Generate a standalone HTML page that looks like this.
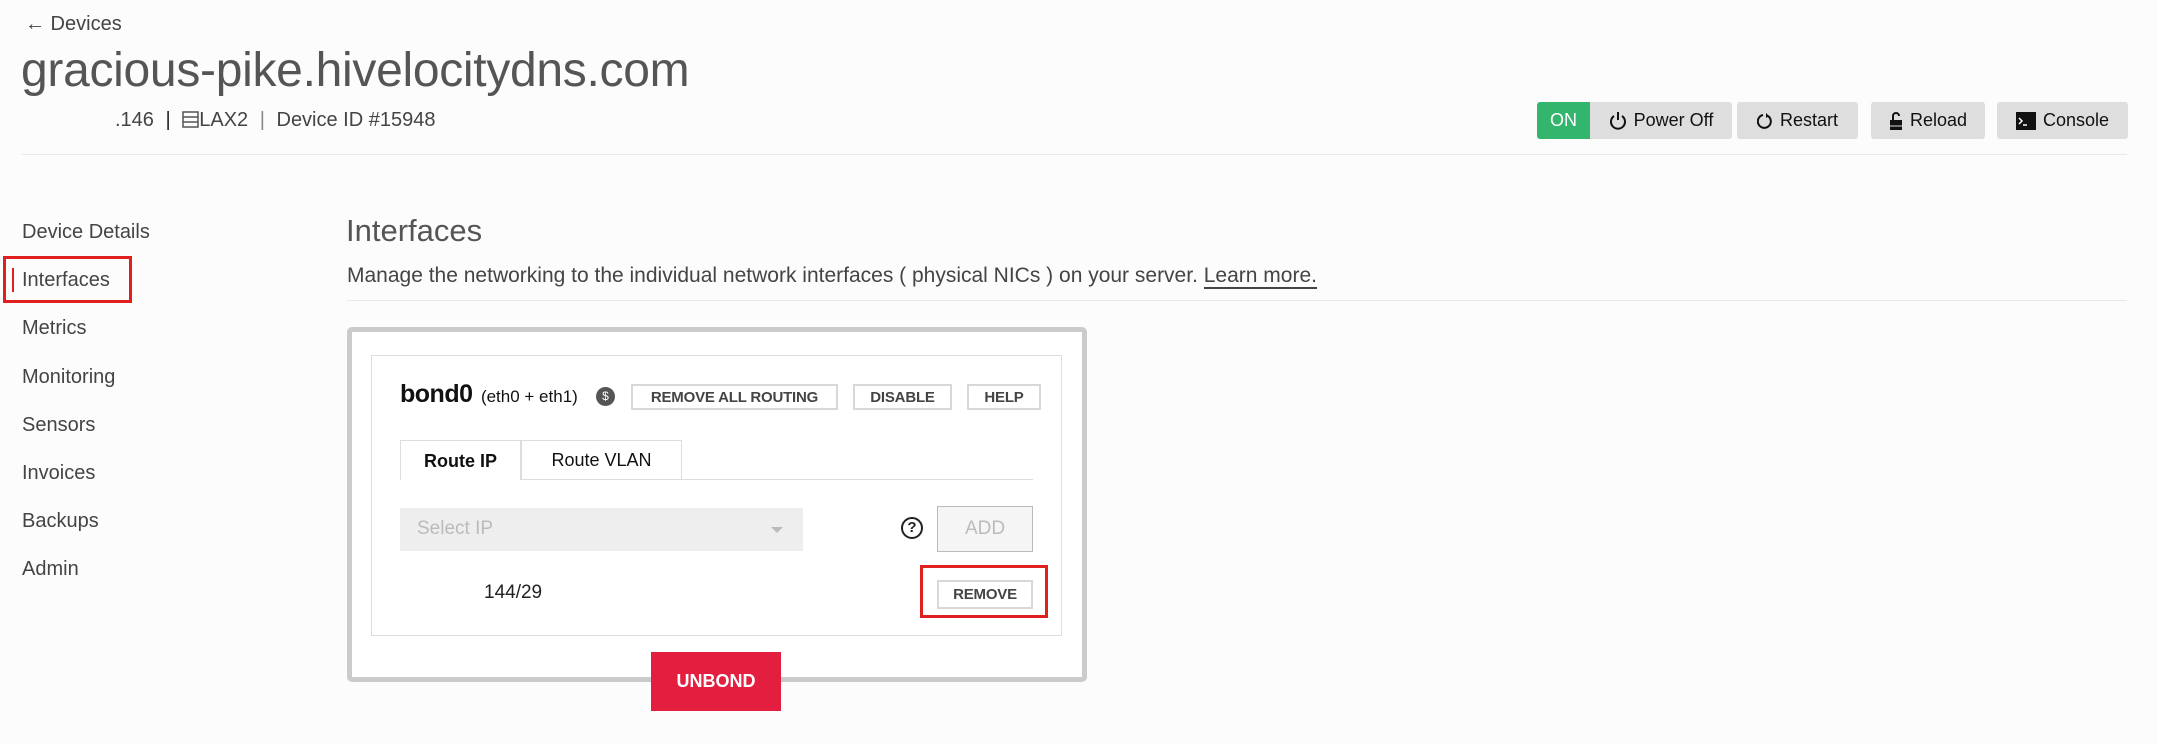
<!DOCTYPE html>
<html><head><meta charset="utf-8"><style>
*{box-sizing:border-box;margin:0;padding:0}
body{width:2157px;height:744px;background:#fcfcfc;font-family:"Liberation Sans",sans-serif;color:#333;position:relative;overflow:hidden}
.a{position:absolute;white-space:nowrap}
.btn{position:absolute;background:#dedede;border-radius:3px;height:37px;top:102px;font-size:18px;color:#111;display:flex;align-items:center;justify-content:center;gap:7px}
.nav{position:absolute;left:22px;font-size:20px;color:#444}
.ob{position:absolute;border:2px solid #d8d8d8;background:#fff;font-size:15px;font-weight:bold;color:#444;display:flex;align-items:center;justify-content:center;letter-spacing:-0.2px}
</style></head><body>
<div class="a" style="left:25px;top:13px;font-size:20px;color:#444">&#8592; Devices</div>
<div class="a" style="left:21px;top:43px;font-size:48px;color:#555;letter-spacing:-0.3px">gracious-pike.hivelocitydns.com</div>
<div class="a" style="left:115px;top:109px;font-size:20px;color:#444">.146 <span style="color:#222;margin:0 6px">|</span> <svg width="17" height="17" viewBox="0 0 17 17" style="vertical-align:-2px"><rect x="1" y="1" width="15" height="15" fill="none" stroke="#555" stroke-width="1.5"/><line x1="1" y1="6" x2="16" y2="6" stroke="#555" stroke-width="1.5"/><line x1="1" y1="11" x2="16" y2="11" stroke="#555" stroke-width="1.5"/></svg>LAX2 <span style="color:#888;margin:0 6px">|</span> Device ID #15948</div>
<div class="a" style="left:22px;top:154px;width:2105px;height:1px;background:#e8e8e8"></div>

<div class="btn" style="left:1537px;width:53px;background:#33b56e;color:#fff;border-radius:3px 0 0 3px">ON</div>
<div class="btn" style="left:1590px;width:142px;border-radius:0 3px 3px 0"><svg width="18" height="20" viewBox="0 0 18 20"><path d="M5 5A7 7 0 1 0 13 5M9 1v8" fill="none" stroke="#111" stroke-width="2"/></svg>Power Off</div>
<div class="btn" style="left:1737px;width:121px"><svg width="16" height="18" viewBox="0 0 16 18"><path d="M6 3A6.5 6.5 0 1 0 11 4" fill="none" stroke="#111" stroke-width="2"/><path d="M9 1l3 3-3 2z" fill="#111"/></svg>Restart</div>
<div class="btn" style="left:1871px;width:114px"><svg width="14" height="20" viewBox="0 0 14 20"><path d="M4 9V5a3 3 0 0 1 6 0" fill="none" stroke="#111" stroke-width="2"/><rect x="1" y="9" width="12" height="10" fill="#111"/><line x1="1" y1="15" x2="13" y2="15" stroke="#ddd"/></svg>Reload</div>
<div class="btn" style="left:1997px;width:131px"><svg width="20" height="18" viewBox="0 0 20 18"><rect x="0" y="0" width="20" height="18" fill="#111"/><path d="M3 6l3 3-3 3" fill="none" stroke="#fff" stroke-width="1.5"/><line x1="7" y1="13" x2="11" y2="13" stroke="#fff" stroke-width="1.5"/></svg>Console</div>

<div class="nav" style="top:221px">Device Details</div>
<div class="a" style="left:3px;top:256px;width:129px;height:47px;border:3px solid #e0201f"></div>
<div class="a" style="left:12px;top:268px;width:2px;height:24px;background:#e0201f"></div>
<div class="nav" style="top:269px">Interfaces</div>
<div class="nav" style="top:317px">Metrics</div>
<div class="nav" style="top:366px">Monitoring</div>
<div class="nav" style="top:414px">Sensors</div>
<div class="nav" style="top:462px">Invoices</div>
<div class="nav" style="top:510px">Backups</div>
<div class="nav" style="top:558px">Admin</div>

<div class="a" style="left:346px;top:213px;font-size:31px;color:#555">Interfaces</div>
<div class="a" style="left:347px;top:264px;font-size:21px;color:#444">Manage the networking to the individual network interfaces ( physical NICs ) on your server. <span style="border-bottom:2px solid #444">Learn more.</span></div>
<div class="a" style="left:347px;top:300px;width:1780px;height:1px;background:#e8e8e8"></div>

<div class="a" style="left:347px;top:327px;width:740px;height:355px;border:5px solid #cbcbcb;border-radius:5px;background:#fff"></div>
<div class="a" style="left:371px;top:355px;width:691px;height:281px;border:1px solid #ddd"></div>
<div class="a" style="left:400px;top:380px;font-size:25px;color:#111;font-weight:bold;letter-spacing:-0.5px">bond0 <span style="font-size:17px;margin-left:2px;font-weight:normal;letter-spacing:0">(eth0 + eth1)</span></div>
<div class="a" style="left:596px;top:387px;width:19px;height:19px;border-radius:50%;background:#555;color:#fff;font-size:12px;text-align:center;line-height:19px">$</div>
<div class="ob" style="left:631px;top:384px;width:207px;height:26px">REMOVE ALL ROUTING</div>
<div class="ob" style="left:853px;top:384px;width:99px;height:26px">DISABLE</div>
<div class="ob" style="left:967px;top:384px;width:74px;height:26px">HELP</div>

<div class="a" style="left:400px;top:479px;width:633px;height:1px;background:#ddd"></div>
<div class="a" style="left:400px;top:440px;width:121px;height:40px;border:1px solid #ddd;border-bottom:none;background:#fff;font-size:18px;font-weight:bold;color:#111;text-align:center;line-height:40px">Route IP</div>
<div class="a" style="left:521px;top:440px;width:161px;height:40px;border:1px solid #ddd;font-size:18px;color:#111;text-align:center;line-height:38px">Route VLAN</div>

<div class="a" style="left:400px;top:508px;width:403px;height:43px;background:#eee"></div>
<div class="a" style="left:417px;top:518px;font-size:19px;color:#bbb">Select IP</div>
<div class="a" style="left:771px;top:527px;border-left:6px solid transparent;border-right:6px solid transparent;border-top:6px solid #bbb"></div>
<div class="a" style="left:901px;top:517px;width:22px;height:22px;border:2px solid #222;border-radius:50%;font-size:15px;font-weight:bold;text-align:center;line-height:18px;color:#222">?</div>
<div class="a" style="left:937px;top:506px;width:96px;height:46px;border:1px solid #bbb;background:#f5f5f5;font-size:19px;color:#bbb;text-align:center;line-height:44px">ADD</div>

<div class="a" style="left:484px;top:582px;font-size:19px;color:#222">144/29</div>
<div class="a" style="left:920px;top:565px;width:128px;height:53px;border:3px solid #e0201f"></div>
<div class="ob" style="left:937px;top:580px;width:96px;height:29px">REMOVE</div>

<div class="a" style="left:651px;top:652px;width:130px;height:59px;background:#e31e3f;color:#fff;font-weight:bold;font-size:18px;text-align:center;line-height:59px">UNBOND</div>
</body></html>
